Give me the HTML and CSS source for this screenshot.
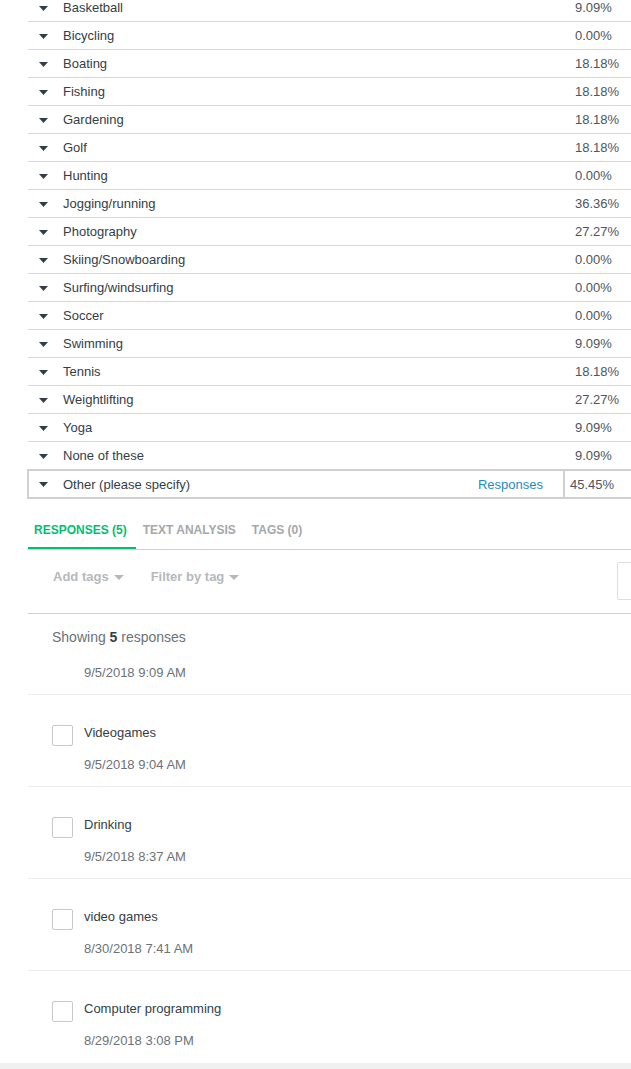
FILE: index.html
```html
<!DOCTYPE html>
<html>
<head>
<meta charset="utf-8">
<link rel="stylesheet" href="styles.css">
</head>
<body>
<div class="page">
  <div class="choices">
    <div class="row"><span class="label"><svg class="caret" width="9" height="5" viewBox="0 0 9 5"><polygon points="0,0 9,0 4.5,5"/></svg>Basketball</span><span class="pct">9.09%</span></div>
    <div class="row"><span class="label"><svg class="caret" width="9" height="5" viewBox="0 0 9 5"><polygon points="0,0 9,0 4.5,5"/></svg>Bicycling</span><span class="pct">0.00%</span></div>
    <div class="row"><span class="label"><svg class="caret" width="9" height="5" viewBox="0 0 9 5"><polygon points="0,0 9,0 4.5,5"/></svg>Boating</span><span class="pct">18.18%</span></div>
    <div class="row"><span class="label"><svg class="caret" width="9" height="5" viewBox="0 0 9 5"><polygon points="0,0 9,0 4.5,5"/></svg>Fishing</span><span class="pct">18.18%</span></div>
    <div class="row"><span class="label"><svg class="caret" width="9" height="5" viewBox="0 0 9 5"><polygon points="0,0 9,0 4.5,5"/></svg>Gardening</span><span class="pct">18.18%</span></div>
    <div class="row"><span class="label"><svg class="caret" width="9" height="5" viewBox="0 0 9 5"><polygon points="0,0 9,0 4.5,5"/></svg>Golf</span><span class="pct">18.18%</span></div>
    <div class="row"><span class="label"><svg class="caret" width="9" height="5" viewBox="0 0 9 5"><polygon points="0,0 9,0 4.5,5"/></svg>Hunting</span><span class="pct">0.00%</span></div>
    <div class="row"><span class="label"><svg class="caret" width="9" height="5" viewBox="0 0 9 5"><polygon points="0,0 9,0 4.5,5"/></svg>Jogging/running</span><span class="pct">36.36%</span></div>
    <div class="row"><span class="label"><svg class="caret" width="9" height="5" viewBox="0 0 9 5"><polygon points="0,0 9,0 4.5,5"/></svg>Photography</span><span class="pct">27.27%</span></div>
    <div class="row"><span class="label"><svg class="caret" width="9" height="5" viewBox="0 0 9 5"><polygon points="0,0 9,0 4.5,5"/></svg>Skiing/Snowboarding</span><span class="pct">0.00%</span></div>
    <div class="row"><span class="label"><svg class="caret" width="9" height="5" viewBox="0 0 9 5"><polygon points="0,0 9,0 4.5,5"/></svg>Surfing/windsurfing</span><span class="pct">0.00%</span></div>
    <div class="row"><span class="label"><svg class="caret" width="9" height="5" viewBox="0 0 9 5"><polygon points="0,0 9,0 4.5,5"/></svg>Soccer</span><span class="pct">0.00%</span></div>
    <div class="row"><span class="label"><svg class="caret" width="9" height="5" viewBox="0 0 9 5"><polygon points="0,0 9,0 4.5,5"/></svg>Swimming</span><span class="pct">9.09%</span></div>
    <div class="row"><span class="label"><svg class="caret" width="9" height="5" viewBox="0 0 9 5"><polygon points="0,0 9,0 4.5,5"/></svg>Tennis</span><span class="pct">18.18%</span></div>
    <div class="row"><span class="label"><svg class="caret" width="9" height="5" viewBox="0 0 9 5"><polygon points="0,0 9,0 4.5,5"/></svg>Weightlifting</span><span class="pct">27.27%</span></div>
    <div class="row"><span class="label"><svg class="caret" width="9" height="5" viewBox="0 0 9 5"><polygon points="0,0 9,0 4.5,5"/></svg>Yoga</span><span class="pct">9.09%</span></div>
    <div class="row last"><span class="label"><svg class="caret" width="9" height="5" viewBox="0 0 9 5"><polygon points="0,0 9,0 4.5,5"/></svg>None of these</span><span class="pct">9.09%</span></div>
    <div class="row other"><span class="label"><svg class="caret" width="9" height="5" viewBox="0 0 9 5"><polygon points="0,0 9,0 4.5,5"/></svg>Other (please specify)<a class="resp-link">Responses</a></span><span class="pct">45.45%</span></div>
  </div>

  <div class="tabs">
    <div class="tab active">RESPONSES (5)</div>
    <div class="tab">TEXT ANALYSIS</div>
    <div class="tab">TAGS (0)</div>
  </div>

  <div class="toolbar">
    <div class="tool">Add tags<svg class="tcaret" width="10" height="5" viewBox="0 0 10 5"><polygon points="0,0 10,0 5,5"/></svg></div>
    <div class="tool">Filter by tag<svg class="tcaret" width="10" height="5" viewBox="0 0 10 5"><polygon points="0,0 10,0 5,5"/></svg></div>
    <div class="search"></div>
  </div>

  <div class="summary">
    <div class="showing">Showing <b>5</b> responses</div>
    <div class="date">9/5/2018 9:09 AM</div>
  </div>

  <div class="resp">
    <span class="check"></span>
    <div class="body">
      <div class="text">Videogames</div>
      <div class="date">9/5/2018 9:04 AM</div>
    </div>
  </div>
  <div class="resp">
    <span class="check"></span>
    <div class="body">
      <div class="text">Drinking</div>
      <div class="date">9/5/2018 8:37 AM</div>
    </div>
  </div>
  <div class="resp">
    <span class="check"></span>
    <div class="body">
      <div class="text">video games</div>
      <div class="date">8/30/2018 7:41 AM</div>
    </div>
  </div>
  <div class="resp final">
    <span class="check"></span>
    <div class="body">
      <div class="text">Computer programming</div>
      <div class="date">8/29/2018 3:08 PM</div>
    </div>
  </div>
</div>
<div class="footer"></div>
</body>
</html>
```
FILE: styles.css
```css
html, body {
  margin: 0;
  padding: 0;
  overflow: hidden;
  background: #ffffff;
}
body {
  font-family: "Liberation Sans", Arial, sans-serif;
  font-size: 13px;
  color: #333e48;
}
.page {
  padding-left: 28px;
}
.choices {
  margin-top: -6px;
}
.row {
  display: grid;
  grid-template-columns: 1fr 56px;
  align-items: center;
  height: 27px;
  border-bottom: 1px solid #d9d9d9;
}
.row.last {
  border-bottom: none;
}
.label {
  display: flex;
  align-items: center;
  padding-left: 11px;
  color: #333e48;
}
.caret {
  fill: #333e48;
  margin-right: 15px;
  margin-top: 1px;
}
.pct {
  color: #4d555c;
}
.row.other {
  grid-template-columns: 534px 1fr;
  height: 26px;
  border: 2px solid #d0d0d0;
  margin-left: -1px;
  margin-right: -16px;
  align-items: stretch;
}
.row.other .label {
  padding-left: 10px;
  padding-right: 20px;
}
.resp-link {
  margin-left: auto;
  color: #1f8ac0;
}
.row.other .pct {
  border-left: 2px solid #d0d0d0;
  padding-left: 5px;
  display: flex;
  align-items: center;
}
.tabs {
  display: flex;
  margin-top: 14px;
  border-bottom: 1px solid #d0d0d0;
}
.tab {
  font-size: 12px;
  font-weight: bold;
  line-height: 14px;
  padding: 10px 8px 10px 7px;
  border-bottom: 2px solid transparent;
  color: #a3a8ac;
}
.tab:first-child {
  padding-left: 6px;
  padding-right: 9px;
}
.tab:nth-child(2) {
  padding-right: 8px;
  padding-left: 7px;
}
.tab:nth-child(3) {
  padding-left: 8px;
}
.tab.active {
  color: #00bf6f;
  border-bottom-color: #00bf6f;
}
.toolbar {
  display: flex;
  align-items: flex-start;
  height: 63px;
  padding-left: 25px;
  border-bottom: 1px solid #d0d0d0;
}
.tool {
  display: flex;
  align-items: center;
  margin-top: 19px;
  line-height: 16px;
  font-weight: bold;
  color: #b5b9bc;
  margin-right: 27px;
}
.tcaret {
  fill: #b5b9bc;
  margin-left: 5px;
}
.search {
  margin-left: auto;
  margin-right: -28px;
  margin-top: 12px;
  width: 40px;
  height: 36px;
  border: 1px solid #dedede;
  border-radius: 2px;
}
.summary {
  padding: 14px 0 13px 24px;
  border-bottom: 1px solid #ececec;
}
.showing {
  font-size: 14px;
  line-height: 18px;
  color: #6b7278;
}
.showing b {
  color: #333e48;
}
.date {
  line-height: 16px;
  color: #6b7278;
}
.summary .date {
  margin-top: 19px;
  padding-left: 32px;
}
.resp {
  display: flex;
  align-items: flex-start;
  padding: 30px 0 13px 24px;
  border-bottom: 1px solid #ececec;
}
.resp.final {
  border-bottom: none;
  padding-bottom: 14px;
}
.check {
  width: 19px;
  height: 19px;
  border: 1px solid #c8c8c8;
  border-radius: 2px;
  margin-right: 11px;
  flex: none;
}
.text {
  line-height: 16px;
  color: #333e48;
}
.resp .date {
  margin-top: 16px;
}
.footer {
  height: 20px;
  background: #f0f0f0;
}
```
